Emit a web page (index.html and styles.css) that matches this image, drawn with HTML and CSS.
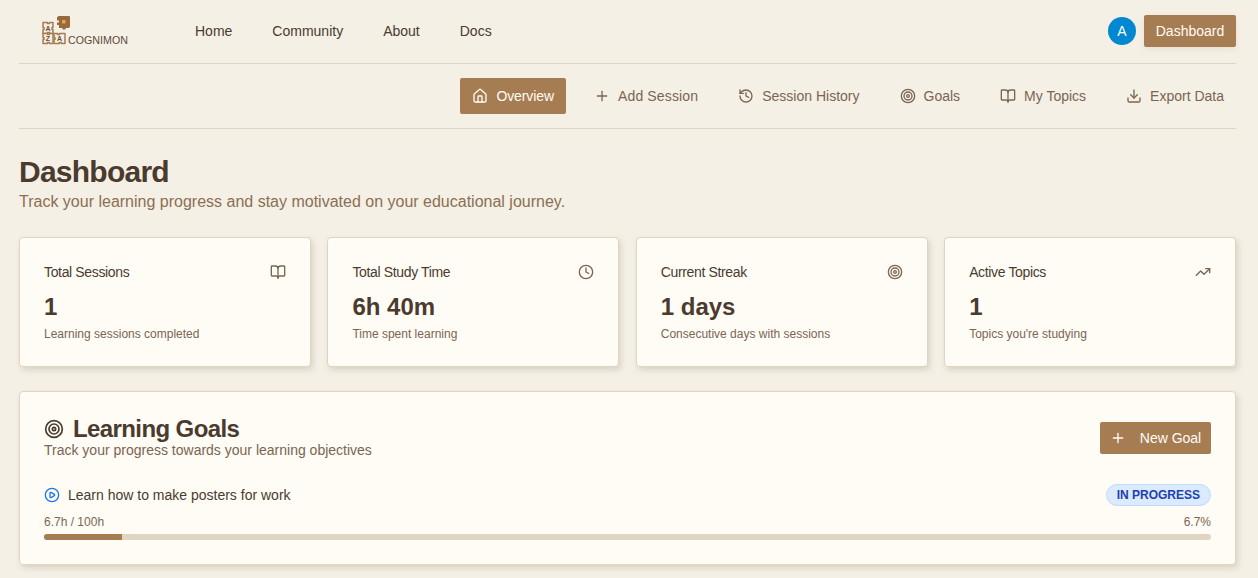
FILE: index.html
```html
<!DOCTYPE html>
<html lang="en">
<head>
<meta charset="utf-8">
<title>Cognimon Dashboard</title>
<link rel="stylesheet" href="styles.css">
</head>
<body>
<svg class="sprite" width="0" height="0" aria-hidden="true">
  <symbol id="i-target" viewBox="0 0 24 24" fill="none" stroke="currentColor" stroke-width="2" stroke-linecap="round" stroke-linejoin="round"><circle cx="12" cy="12" r="10"/><circle cx="12" cy="12" r="6"/><circle cx="12" cy="12" r="2"/></symbol>
  <symbol id="i-book" viewBox="0 0 24 24" fill="none" stroke="currentColor" stroke-width="2" stroke-linecap="round" stroke-linejoin="round"><path d="M12 7v14"/><path d="M3 18a1 1 0 0 1-1-1V4a1 1 0 0 1 1-1h5a4 4 0 0 1 4 4 4 4 0 0 1 4-4h5a1 1 0 0 1 1 1v13a1 1 0 0 1-1 1h-6a3 3 0 0 0-3 3 3 3 0 0 0-3-3z"/></symbol>
  <symbol id="i-plus" viewBox="0 0 24 24" fill="none" stroke="currentColor" stroke-width="2" stroke-linecap="round" stroke-linejoin="round"><path d="M5 12h14"/><path d="M12 5v14"/></symbol>
</svg>
<header class="topbar">
  <a class="logo" href="#">
    <svg class="logo-mark" width="30" height="30" viewBox="0 0 30 30" fill="none">
      <path d="M16 2.500 17.500 1h11l.5 1v9.500l-1 1.500h-3.500v1.500h-3V13H18v-3h-2V7.500h2v-2h-2z" fill="#99693c"/>
      <rect x="21" y="5" width="3.500" height="3.500" fill="#e3a04f"/>
      <g stroke="#a67c52" stroke-width="1.500" fill="#f5f0e6" stroke-linejoin="round">
        <path d="M2 7.500h4.500v1h2v-1H12v5h-1v2h1v4H8.500v-1h-2v1H2v-4h1v-2H2z"/>
        <path d="M2 18.500h4.500v1h2v-1H12v10H8.500v-1h-2v1H2v-4h1v-2H2z"/>
        <path d="M13 18.500h3.500v1h2v-1H24v10h-3.500v-1h-2v1H13v-4h1v-2h-1z"/>
      </g>
      <text class="logo-glyph" x="7" y="15.500">A</text>
      <text class="logo-glyph" x="7" y="26">Z</text>
      <text class="logo-glyph" x="18.500" y="26">A</text>
    </svg>
    <span class="logo-text">COGNIMON</span>
  </a>
  <nav class="mainnav">
    <a href="#">Home</a>
    <a href="#">Community</a>
    <a href="#">About</a>
    <a href="#">Docs</a>
  </nav>
  <div class="account">
    <span class="avatar">A</span>
    <a class="btn btn-raised" href="#">Dashboard</a>
  </div>
</header>

<nav class="subnav">
  <a class="tab tab-active" href="#"><svg class="ico" viewBox="0 0 24 24" fill="none" stroke="currentColor" stroke-width="2" stroke-linecap="round" stroke-linejoin="round"><path d="M15 21v-8a1 1 0 0 0-1-1h-4a1 1 0 0 0-1 1v8"/><path d="M3 10a2 2 0 0 1 .709-1.528l7-5.999a2 2 0 0 1 2.582 0l7 5.999A2 2 0 0 1 21 10v9a2 2 0 0 1-2 2H5a2 2 0 0 1-2-2z"/></svg>Overview</a>
  <a class="tab tab-add" href="#"><svg class="ico"><use href="#i-plus"/></svg>Add Session</a>
  <a class="tab" href="#"><svg class="ico" viewBox="0 0 24 24" fill="none" stroke="currentColor" stroke-width="2" stroke-linecap="round" stroke-linejoin="round"><path d="M3 12a9 9 0 1 0 9-9 9.750 9.750 0 0 0-6.740 2.740L3 8"/><path d="M3 3v5h5"/><path d="M12 7v5l4 2"/></svg>Session History</a>
  <a class="tab" href="#"><svg class="ico"><use href="#i-target"/></svg>Goals</a>
  <a class="tab" href="#"><svg class="ico"><use href="#i-book"/></svg>My Topics</a>
  <a class="tab" href="#"><svg class="ico" viewBox="0 0 24 24" fill="none" stroke="currentColor" stroke-width="2" stroke-linecap="round" stroke-linejoin="round"><path d="M12 15V3"/><path d="M21 15v4a2 2 0 0 1-2 2H5a2 2 0 0 1-2-2v-4"/><path d="m7 10 5 5 5-5"/></svg>Export Data</a>
</nav>

<main>
  <section class="intro">
    <h1>Dashboard</h1>
    <p>Track your learning progress and stay motivated on your educational journey.</p>
  </section>

  <section class="stats">
    <article class="card stat">
      <div class="stat-head"><h3>Total Sessions</h3><svg class="ico"><use href="#i-book"/></svg></div>
      <div class="stat-value">1</div>
      <p class="stat-note">Learning sessions completed</p>
    </article>
    <article class="card stat">
      <div class="stat-head"><h3>Total Study Time</h3><svg class="ico" viewBox="0 0 24 24" fill="none" stroke="currentColor" stroke-width="2" stroke-linecap="round" stroke-linejoin="round"><circle cx="12" cy="12" r="10"/><path d="M12 6v6l4 2"/></svg></div>
      <div class="stat-value">6h 40m</div>
      <p class="stat-note">Time spent learning</p>
    </article>
    <article class="card stat">
      <div class="stat-head"><h3>Current Streak</h3><svg class="ico"><use href="#i-target"/></svg></div>
      <div class="stat-value">1 days</div>
      <p class="stat-note">Consecutive days with sessions</p>
    </article>
    <article class="card stat">
      <div class="stat-head"><h3>Active Topics</h3><svg class="ico" viewBox="0 0 24 24" fill="none" stroke="currentColor" stroke-width="2" stroke-linecap="round" stroke-linejoin="round"><path d="M16 7h6v6"/><path d="m22 7-8.500 8.500-5-5L2 17"/></svg></div>
      <div class="stat-value">1</div>
      <p class="stat-note">Topics you're studying</p>
    </article>
  </section>

  <section class="card goals">
    <div class="goals-head">
      <div>
        <h2><svg class="ico-lg"><use href="#i-target"/></svg>Learning Goals</h2>
        <p>Track your progress towards your learning objectives</p>
      </div>
      <a class="btn btn-new" href="#"><svg class="ico"><use href="#i-plus"/></svg>New Goal</a>
    </div>
    <div class="goal">
      <div class="goal-row">
        <div class="goal-title"><svg class="ico play" viewBox="0 0 24 24" fill="none" stroke="currentColor" stroke-width="2" stroke-linecap="round" stroke-linejoin="round"><circle cx="12" cy="12" r="10"/><path d="M9 9.003a1 1 0 0 1 1.517-.859l4.997 2.997a1 1 0 0 1 0 1.718l-4.997 2.997A1 1 0 0 1 9 14.996z"/></svg>Learn how to make posters for work</div>
        <span class="badge">IN PROGRESS</span>
      </div>
      <div class="goal-meta"><span>6.7h / 100h</span><span>6.7%</span></div>
      <div class="track"><div class="fill" style="width:6.7%"></div></div>
    </div>
  </section>
</main>
</body>
</html>
```
FILE: styles.css
```css
* { box-sizing: border-box; }
html, body { height: 578px; overflow: hidden; }
body {
  margin: 0;
  padding: 0 22px 0 19px;
  background: #f5f0e6;
  color: #4a3b2e;
  font-family: "Liberation Sans", Arial, sans-serif;
  font-size: 14px;
}
a { color: inherit; text-decoration: none; }
h1, h2, h3, p { margin: 0; }
.sprite { position: absolute; }
.ico { width: 16px; height: 16px; flex: none; }

.topbar {
  display: flex;
  align-items: center;
  height: 64px;
  padding-bottom: 1px;
  border-bottom: 1px solid #e0d5c1;
}
.logo { display: flex; align-items: flex-end; width: 176px; padding-left: 22px; height: 32px; }
.logo-mark { display: block; margin-bottom: 2px; }
.logo-glyph { font-family: "Liberation Sans", Arial, sans-serif; font-size: 7px; font-weight: 700; fill: #6b4f35; text-anchor: middle; }
.logo-text { font-size: 10.700px; color: #5c4a3a; line-height: 14px; margin-left: -3px; margin-bottom: 0; }
.mainnav { display: flex; gap: 40px; color: #4a3b2e; }
.account { display: flex; align-items: center; gap: 8px; margin-left: auto; }
.avatar {
  width: 28px; height: 28px; border-radius: 50%;
  background: #0288d1; color: #fff;
  display: flex; align-items: center; justify-content: center;
  font-size: 14px;
}
.btn {
  display: flex; align-items: center; justify-content: center;
  background: #a67c52; color: #fffcf5;
  border-radius: 2px;
}
.btn-raised { width: 92px; height: 32px; box-shadow: 0 2px 6px rgba(166,124,82,.15); }

.subnav {
  display: flex;
  align-items: center;
  justify-content: flex-end;
  gap: 16px;
  height: 65px;
  border-bottom: 1px solid #e0d5c1;
  color: #7a6552;
}
.tab {
  display: flex; align-items: center; gap: 8px;
  height: 36px; padding: 0 12px;
  border-radius: 2px;
}
.tab-active { background: #a67c52; color: #fffcf5; letter-spacing: -.1px; }
.tab-add { letter-spacing: .15px; }

.intro { padding-top: 25px; }
h1 { font-size: 30px; line-height: 36px; color: #4a3b2e; font-weight: 700; letter-spacing: -.025em; }
.intro p { font-size: 16px; line-height: 20px; color: #8b6f52; margin-top: 2px; }

.stats {
  display: grid;
  grid-template-columns: repeat(4, 1fr);
  gap: 16.500px;
  margin-top: 25px;
}
.card {
  background: #fffcf5;
  border: 1px solid #e0d5c1;
  border-radius: 4px;
  box-shadow: 2px 3px 6px rgba(90,70,50,.18);
}
.stat { height: 130px; padding: 24px; }
.stat-head { display: flex; justify-content: space-between; align-items: center; height: 20px; color: #7a6552; }
.stat-head h3 { font-size: 14px; font-weight: 400; color: #4a3b2e; letter-spacing: -.025em; }
.stat-value { font-size: 24px; font-weight: 700; line-height: 32px; margin-top: 9px; color: #4a3b2e; }
.stat-note { font-size: 12px; line-height: 16px; margin-top: 3px; color: #7a6552; }

.goals { margin-top: 24px; height: 174px; padding: 24px; }
.goals-head { display: flex; justify-content: space-between; align-items: flex-start; padding-top: 1px; }
h2 { display: flex; align-items: center; gap: 9px; font-size: 24px; line-height: 24px; font-weight: 700; color: #4a3b2e; letter-spacing: -.025em; }
.ico-lg { width: 20px; height: 20px; flex: none; }
.goals-head p { color: #7a6552; line-height: 20px; margin-top: -1px; }
.btn-new { gap: 14px; width: 111px; height: 32px; margin-top: 5px; }

.goal { margin-top: 24px; }
.goal-row { display: flex; justify-content: space-between; align-items: center; height: 22px; }
.goal-title { display: flex; align-items: center; gap: 8px; color: #4a3b2e; }
.play { color: #1e78e6; }
.badge {
  display: flex; align-items: center; height: 22px; padding: 0 10px;
  border: 1px solid #bfdbfe; border-radius: 11px;
  background: #dbeafe; color: #1e40af;
  font-size: 12px; font-weight: 700;
}
.goal-meta { display: flex; justify-content: space-between; font-size: 12px; line-height: 16px; color: #7a6552; margin-top: 8px; }
.track { height: 6px; border-radius: 3px; background: #e0d5c1; margin-top: 4px; overflow: hidden; }
.fill { height: 100%; background: #a67c52; }
```
